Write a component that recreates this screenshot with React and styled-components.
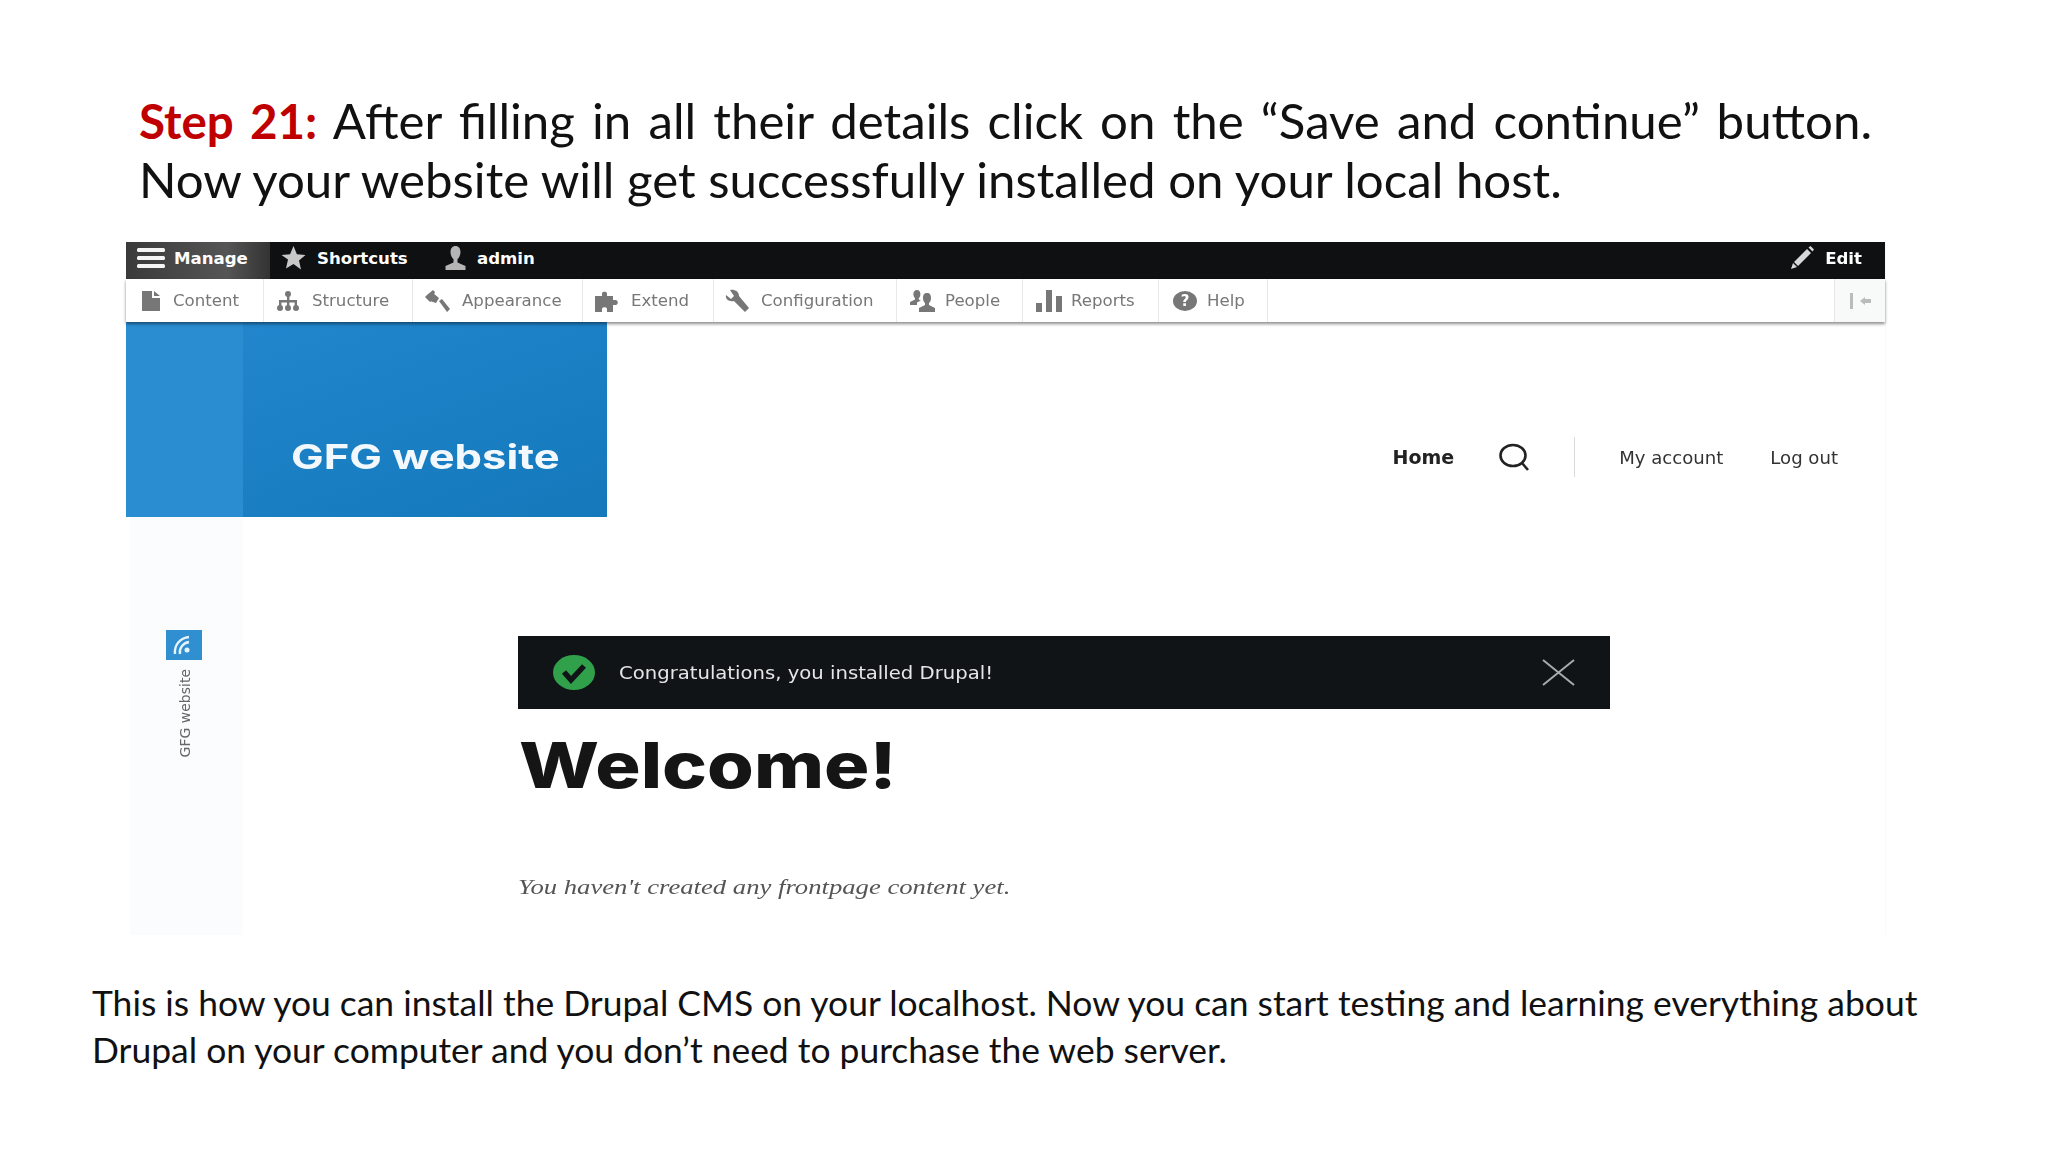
import React from "react";
import styled, { createGlobalStyle } from "styled-components";

const GlobalStyle = createGlobalStyle`
  html, body {
    margin: 0;
    padding: 0;
    background: #fff;
  }
`;

// Slide
const Slide = styled.div`
  width: 2048px;
  height: 1152px;
  overflow: hidden;
  background: #fff;
  font-family: Lato, "Liberation Sans", sans-serif;
  color: #111;
`;

const Title = styled.div`
  width: 1733px;
  margin-left: 139px;
  padding-top: 91px;
  font-size: 49.2px;
  line-height: 57.5px;
  height: 242px;
  box-sizing: border-box;
`;

const JustifiedLine = styled.div`
  text-align: justify;
  text-align-last: justify;
`;

const Step = styled.span`
  color: #c00000;
  font-weight: 700;
  font-size: 47.5px;
`;

const Note = styled.div`
  width: 1840px;
  margin-left: 92px;
  padding-top: 44px;
  font-size: 35.45px;
  line-height: 47px;
`;

// Screenshot
const Shot = styled.div`
  width: 1760px;
  height: 693px;
  margin-left: 126px;
  display: flex;
  flex-direction: column;
  filter: blur(0.45px);
  font-family: "DejaVu Sans", sans-serif;
  border-right: 1px solid #f8f9fa;
  box-sizing: border-box;
`;

// the original capture is stretched sideways, so some labels are too
const Wide = styled.span`
  display: inline-block;
  white-space: nowrap;
  transform: scaleX(${(p) => p.$x});
  transform-origin: left center;
`;

const TopBar = styled.div`
  height: 37px;
  flex: none;
  display: flex;
  align-items: center;
  background: #0f1011;
  color: #fff;
  font-size: 16.6px;
  font-weight: 700;
`;

const TopItem = styled.div`
  width: ${(p) => p.$w}px;
  height: 100%;
  flex: none;
  box-sizing: border-box;
  display: flex;
  align-items: center;
  padding-left: ${(p) => p.$pad}px;
  padding-bottom: 5px;
  gap: ${(p) => p.$gap}px;
  background: ${(p) => (p.$active ? "linear-gradient(90deg, #3a3a3a, #555 70%, #333)" : "none")};
`;

const EditItem = styled.div`
  margin-left: auto;
  padding: 0 23px 5px 0;
  display: flex;
  align-items: center;
  gap: 11px;
`;

const TrayBar = styled.div`
  height: 43px;
  flex: none;
  display: flex;
  background: #fff;
  color: #777;
  font-size: 16.6px;
  box-shadow: 0 2px 3px rgba(0, 0, 0, 0.45);
  position: relative;
  z-index: 1;
`;

const TrayItem = styled.div`
  width: ${(p) => p.$w}px;
  flex: none;
  box-sizing: border-box;
  display: flex;
  align-items: center;
  padding-left: ${(p) => p.$pad}px;
  gap: ${(p) => p.$gap}px;
  border-right: 1px solid #e8e8e8;
`;

const TrayToggle = styled.div`
  margin-left: auto;
  width: 51px;
  box-sizing: border-box;
  display: flex;
  align-items: center;
  justify-content: center;
  background: #f8f9f9;
  border-left: 1px solid #e8e8e8;
`;

const Header = styled.div`
  height: 195px;
  flex: none;
  display: flex;
  align-items: center;
  justify-content: space-between;
`;

const Banner = styled.div`
  width: 481px;
  height: 100%;
  display: flex;
  background: linear-gradient(160deg, #2388cf, #1478bb);
`;

const BannerStrip = styled.div`
  width: 117px;
  flex: none;
  background: #2a8dd2;
`;

const SiteName = styled.div`
  padding: 115px 0 0 48px;
  color: #f2f8fc;
  font-family: Inter, sans-serif;
  font-size: 33.5px;
  font-weight: 700;
  line-height: 40px;
`;

const Nav = styled.div`
  display: flex;
  align-items: center;
  gap: 44px;
  padding-right: 47px;
  margin-top: 75px;
  color: #333;
  font-size: 18.1px;
`;

const NavHome = styled.span`
  font-size: 19px;
  font-weight: 700;
  color: #222;
`;

const NavDivider = styled.div`
  width: 1px;
  height: 40px;
  background: #d8dcdf;
`;

const NavLinks = styled.div`
  display: flex;
  gap: 47px;
`;

const Body = styled.div`
  flex: 1;
  display: flex;
`;

const SideStrip = styled.div`
  width: 113px;
  margin-left: 4px;
  flex: none;
  background: #fbfcfd;
  display: flex;
  flex-direction: column;
  align-items: center;
  padding: 113px 5px 0 0;
  box-sizing: border-box;
`;

const LogoBox = styled.div`
  width: 36px;
  height: 30px;
  background: #2f8fd0;
  display: flex;
  align-items: center;
  justify-content: center;
`;

const SideLabel = styled.div`
  margin: 9px 0 0 2px;
  writing-mode: vertical-rl;
  transform: rotate(180deg);
  font-size: 14px;
  color: #666;
  white-space: nowrap;
`;

const Main = styled.div`
  flex: 1;
  padding: 119px 0 0 275px;
`;

const Message = styled.div`
  width: 1092px;
  height: 73px;
  box-sizing: border-box;
  background: #101416;
  color: #e6e6e6;
  display: flex;
  align-items: center;
  padding: 0 35px;
  gap: 24px;
  font-size: 17px;
`;

const CloseIcon = styled.svg`
  margin-left: auto;
`;

const Welcome = styled.h1`
  margin: 18px 0 0 1px;
  font-family: Inter, sans-serif;
  font-size: 63px;
  line-height: 76px;
  font-weight: 800;
  color: #151515;
`;

const Empty = styled.p`
  margin: 71px 0 0;
  font-family: "Liberation Serif", serif;
  font-style: italic;
  font-size: 21px;
  line-height: 26px;
  color: #555;
`;

// Icons
const Burger = () => (
  <svg width="28" height="22" viewBox="0 0 28 22" fill="#f5f5f5">
    <rect y="1" width="28" height="4" rx="1.5" />
    <rect y="9" width="28" height="4" rx="1.5" />
    <rect y="17" width="28" height="4" rx="1.5" />
  </svg>
);

const Star = () => (
  <svg width="25" height="24" viewBox="0 0 24 24" fill="#c8c8c8">
    <path d="M12 0l3.4 8.2 8.6.7-6.5 5.7 2 8.9L12 18l-7.5 4.5 2-8.9L0 8.9l8.6-.7z" />
  </svg>
);

const User = () => (
  <svg width="25" height="24" viewBox="0 0 24 24" fill="#b5b5b5">
    <path d="M12 0c3.2 0 5 2.6 5 6 0 3-1.4 6-3 7v3.4l8 3.6V24H2v-4l8-3.6V13c-1.6-1-3-4-3-7 0-3.4 1.8-6 5-6z" />
  </svg>
);

const Pencil = () => (
  <svg width="24" height="24" viewBox="0 0 24 24" fill="#d8d8d8">
    <path d="M17 3l4 4L8 20l-4-4zM3 17l4 4-6 2zM18.5 1.5l2-1.5 3.5 3.5-1.500 2z" />
  </svg>
);

const Doc = () => (
  <svg width="18" height="20" viewBox="0 0 18 20" fill="#777">
    <path d="M0 0h10v7h8v13H0zM12 0l6 5h-6z" />
  </svg>
);

const Tree = () => (
  <svg width="26" height="20" viewBox="0 0 26 20" fill="#777">
    <circle cx="13" cy="3" r="3" />
    <rect x="12" y="4" width="2.4" height="12" />
    <path d="M4 9h18v7h-2.4v-4.600H6.400V16H4z" />
    <circle cx="5" cy="17" r="3" />
    <circle cx="13" cy="17" r="3" />
    <circle cx="21" cy="17" r="3" />
  </svg>
);

const Gavel = () => (
  <svg width="26" height="22" viewBox="0 0 26 22" fill="#777">
    <path d="M8 0l2 2-3 8-2 2-2-2-3-3 2-2zM8 3l6 5-3 5-6-2zM14 11l3-2 8 10-3 3z" />
  </svg>
);

const Puzzle = () => (
  <svg width="26" height="22" viewBox="0 0 26 22" fill="#777">
    <path d="M0 6h7V3.500C7 1 12 1 12 3.500V6h6v4h2.500c3 0 3 5 0 5H18v7h-6v-3c0-2.500-5-2.500-5 0v3H0z" />
  </svg>
);

const Wrench = () => (
  <svg width="26" height="24" viewBox="0 0 26 24" fill="#777">
    <path d="M2 6l5 4 3-3-4-6c4-1 9 1 9 6l10 12-4 4L10 12C5 13 1 10 2 6z" />
  </svg>
);

const People = () => (
  <svg width="27" height="22" viewBox="0 0 27 22" fill="#777">
    <path d="M17 3c3 0 4 2 4 5s-1 4-2 5v2l6 3v4H9v-4l6-3v-2c-1-1-2-2-2-5s1-5 4-5zM7 0c2.400 0 3.400 2 3.400 4 0 2-.7 3.400-1.600 4v1.500l2 1-3.800 2V15H0v-3l5-2.500V8C4 7.400 3.400 6 3.400 4 3.400 2 4.600 0 7 0z" />
  </svg>
);

const Bars = () => (
  <svg width="26" height="22" viewBox="0 0 26 22" fill="#777">
    <rect y="13" width="6" height="9" />
    <rect x="10" y="0" width="6" height="22" />
    <rect x="20" y="6" width="6" height="16" />
  </svg>
);

const HelpDot = styled.div`
  width: 24px;
  height: 20px;
  border-radius: 50%;
  background: #777;
  color: #fff;
  font-size: 15px;
  font-weight: 700;
  line-height: 20px;
  text-align: center;
`;

const ToggleIcon = () => (
  <svg width="24" height="16" viewBox="0 0 24 16" fill="#bbb">
    <rect x="2" y="0" width="3" height="16" />
    <path d="M12 8l5-4v2h6v4h-6v2z" />
  </svg>
);

const Search = () => (
  <svg width="32" height="28" viewBox="0 0 32 28" fill="none" stroke="#222" strokeWidth="2.6">
    <ellipse cx="15" cy="12.500" rx="12.500" ry="10.500" />
    <path d="M24 20l6 7" />
  </svg>
);

const Drop = () => (
  <svg width="24" height="20" viewBox="0 0 24 20" fill="none" stroke="#e8f4fc" strokeWidth="2.4">
    <path d="M3 19C2 10 8 3 17 2" />
    <path d="M8 19C7 13 11 8 17 7" />
    <circle cx="15" cy="15" r="2.500" fill="#e8f4fc" stroke="none" />
  </svg>
);

const Check = () => (
  <svg width="42" height="35" viewBox="0 0 42 35">
    <ellipse cx="21" cy="17.500" rx="21" ry="17.500" fill="#30a04a" />
    <path d="M11 17l7 8 13-14" fill="none" stroke="#101416" strokeWidth="5.500" />
  </svg>
);

const tray = [
  { label: "Content", w: 138, pad: 16, gap: 13, Icon: Doc },
  { label: "Structure", w: 149, pad: 11, gap: 11, Icon: Tree },
  { label: "Appearance", w: 170, pad: 12, gap: 11, Icon: Gavel },
  { label: "Extend", w: 131, pad: 12, gap: 10, Icon: Puzzle },
  { label: "Configuration", w: 183, pad: 10, gap: 11, Icon: Wrench },
  { label: "People", w: 126, pad: 13, gap: 8, Icon: People },
  { label: "Reports", w: 136, pad: 13, gap: 9, Icon: Bars },
  { label: "Help", w: 109, pad: 14, gap: 10, Icon: () => <HelpDot>?</HelpDot> },
];

const App = () => (
  <Slide>
    <GlobalStyle />
    <Title>
      <JustifiedLine>
        <Step>Step 21:</Step> After filling in all their details click on the “Save and continue” button.
      </JustifiedLine>
      Now your website will get successfully installed on your local host.
    </Title>
    <Shot>
      <TopBar>
        <TopItem $w={144} $pad={11} $gap={9} $active>
          <Burger />
          Manage
        </TopItem>
        <TopItem $w={168} $pad={11} $gap={11}>
          <Star />
          Shortcuts
        </TopItem>
        <TopItem $w={120} $pad={5} $gap={9}>
          <User />
          admin
        </TopItem>
        <EditItem>
          <Pencil />
          Edit
        </EditItem>
      </TopBar>
      <TrayBar>
        {tray.map(({ label, w, pad, gap, Icon }) => (
          <TrayItem key={label} $w={w} $pad={pad} $gap={gap}>
            <Icon />
            {label}
          </TrayItem>
        ))}
        <TrayToggle>
          <ToggleIcon />
        </TrayToggle>
      </TrayBar>
      <Header>
        <Banner>
          <BannerStrip />
          <SiteName>
            <Wide $x={1.3}>GFG website</Wide>
          </SiteName>
        </Banner>
        <Nav>
          <NavHome>Home</NavHome>
          <Search />
          <NavDivider />
          <NavLinks>
            <span>My account</span>
            <span>Log out</span>
          </NavLinks>
        </Nav>
      </Header>
      <Body>
        <SideStrip>
          <LogoBox>
            <Drop />
          </LogoBox>
          <SideLabel>GFG website</SideLabel>
        </SideStrip>
        <Main>
          <Message>
            <Check />
            <Wide $x={1.155}>Congratulations, you installed Drupal!</Wide>
            <CloseIcon width="33" height="27" viewBox="0 0 33 27" stroke="#a8abac" strokeWidth="2">
              <path d="M1 1l31 25M32 1L1 26" />
            </CloseIcon>
          </Message>
          <Welcome>
            <Wide $x={1.2}>Welcome!</Wide>
          </Welcome>
          <Empty>
            <Wide $x={1.27}>You haven't created any frontpage content yet.</Wide>
          </Empty>
        </Main>
      </Body>
    </Shot>
    <Note>
      This is how you can install the Drupal CMS on your localhost. Now you can start testing and learning everything about
      <br />
      Drupal on your computer and you don’t need to purchase the web server.
    </Note>
  </Slide>
);

export default App;
